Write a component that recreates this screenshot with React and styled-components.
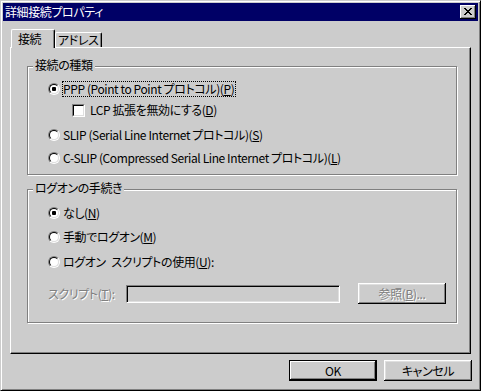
import React from 'react'
import styled, { createGlobalStyle, css } from 'styled-components'

const FACE = '#cccccc'
const SHADOW = '#808080'
const LIGHT = '#dfdfdf'
const NAVY = '#000066'

const GlobalStyle = createGlobalStyle`
  html, body { margin: 0; padding: 0; background: ${FACE}; }
  body {
    font-family: "Noto Sans CJK JP", "Liberation Sans", sans-serif;
    font-size: 12px;
    line-height: 14px;
    letter-spacing: -0.4px;
    font-feature-settings: "palt";
    color: #000;
  }
  * { box-sizing: border-box; }
`

const Window = styled.div`
  width: 481px;
  height: 391px;
  background: ${FACE};
  border: 1px solid;
  border-color: ${FACE} #000 #000 ${FACE};
  box-shadow: inset 1px 1px #fff, inset -1px -1px ${SHADOW};
  padding: 2px;
  display: flex;
  flex-direction: column;
`

const TitleBar = styled.div`
  height: 18px;
  background: ${NAVY};
  color: #fff;
  display: flex;
  align-items: center;
  justify-content: space-between;
  padding: 0 2px;
`

const TitleText = styled.span`
  white-space: nowrap;
`

const CloseButton = styled.div`
  width: 16px;
  height: 14px;
  background: ${FACE};
  box-shadow: inset -1px -1px #000, inset 1px 1px #fff, inset -2px -2px ${SHADOW};
  display: flex;
  align-items: center;
  justify-content: center;
  padding: 0 1px 1px 0;
`

const Body = styled.div`
  flex: 1;
  display: flex;
  flex-direction: column;
  padding: 0 7px;
`

const TabRow = styled.div`
  display: flex;
  align-items: flex-end;
  margin-top: 8px;
  padding-left: 1px;
`

const Tab = styled.div`
  position: relative;
  width: ${p => p.$w}px;
  height: ${p => (p.$active ? 19 : 15)}px;
  margin-bottom: ${p => (p.$active ? -1 : 0)}px;
  z-index: ${p => (p.$active ? 2 : 1)};
  padding-left: ${p => p.$pl}px;
  background: ${FACE};
  border: 1px solid;
  border-bottom: none;
  border-color: #fff #000 #000 #fff;
  border-radius: 2px 2px 0 0;
  box-shadow: inset -1px 0 ${SHADOW};
  display: flex;
  align-items: center;
  white-space: nowrap;
`

const Panel = styled.div`
  height: 307px;
  border: 1px solid;
  border-color: #fff #000 #000 #fff;
  box-shadow: inset -1px -1px ${SHADOW};
  padding: 18px 0 0 16px;
`

const Group = styled.div`
  position: relative;
  width: 430px;
  height: ${p => p.$h}px;
  margin-top: ${p => p.$mt || 0}px;
  border: 1px solid ${SHADOW};
  box-shadow: inset 1px 1px #fff, 1px 1px #fff;
  padding: ${p => p.$pt}px 0 0 20px;
`

const Legend = styled.span`
  position: absolute;
  top: -9px;
  left: 5px;
  padding: 0 2px;
  background: ${FACE};
  white-space: nowrap;
`

const Row = styled.div`
  display: flex;
  align-items: center;
  height: ${p => p.$h || 16}px;
  margin-top: ${p => p.$mt || 0}px;
  margin-left: ${p => p.$indent || 0}px;
  gap: ${p => p.$gap || 2}px;
`

const RadioOuter = styled.span`
  flex: none;
  width: 12px;
  height: 12px;
  border-radius: 50%;
  border: 1px solid;
  border-color: ${SHADOW} #fff #fff ${SHADOW};
`

const RadioInner = styled.span`
  width: 10px;
  height: 10px;
  border-radius: 50%;
  border: 1px solid;
  border-color: #000 ${LIGHT} ${LIGHT} #000;
  background: #fff;
  display: flex;
  align-items: center;
  justify-content: center;
`

const Dot = styled.span`
  width: 4px;
  height: 4px;
  border-radius: 1px;
  background: #000;
`

const CheckOuter = styled.span`
  flex: none;
  width: 13px;
  height: 13px;
  border: 1px solid;
  border-color: ${SHADOW} #fff #fff ${SHADOW};
`

const CheckInner = styled.span`
  display: block;
  width: 11px;
  height: 11px;
  border: 1px solid;
  border-color: #000 ${LIGHT} ${LIGHT} #000;
  background: #fff;
`

const Label = styled.span`
  height: 16px;
  border: 1px dotted ${p => (p.$focus ? '#000' : 'transparent')};
  padding: 0 1px 0 0;
  white-space: pre;
  ${p => p.$disabled && css`
    color: ${SHADOW};
    text-shadow: 1px 1px #fff;
  `}
`

const Key = styled.span`
  text-decoration: underline;
  text-underline-offset: 1px;
`

const FieldLabel = styled(Label)`
  flex: none;
  width: 76px;
  border: none;
  height: auto;
`

const TextBox = styled.div`
  flex: none;
  width: 214px;
  height: 18px;
  background: ${FACE};
  border: 1px solid;
  border-color: ${SHADOW} #fff #fff ${SHADOW};
  box-shadow: inset 1px 1px #000, inset -1px -1px ${LIGHT};
`

const Button = styled.button`
  flex: none;
  width: 88px;
  height: 21px;
  margin-left: ${p => p.$ml || 0}px;
  padding: 0;
  border: none;
  background: ${FACE};
  font: inherit;
  letter-spacing: inherit;
  color: #000;
  box-shadow: inset -1px -1px #000, inset 1px 1px #fff, inset -2px -2px ${SHADOW}, inset 2px 2px ${LIGHT};
  ${p => p.$default && css`
    box-shadow: inset 0 0 0 1px #000, inset -2px -2px #000, inset 2px 2px #fff, inset -3px -3px ${SHADOW};
  `}
  ${p => p.$disabled && css`
    color: ${SHADOW};
    text-shadow: 1px 1px #fff;
  `}
`

const ButtonRow = styled.div`
  display: flex;
  justify-content: flex-end;
  gap: 7px;
  margin-top: 6px;
  margin-right: -1px;
`

const X_ROWS = [
  [0, 1, 6, 7],
  [1, 2, 5, 6],
  [2, 3, 4, 5],
  [3, 4],
  [2, 3, 4, 5],
  [1, 2, 5, 6],
  [0, 1, 6, 7],
]

const CloseGlyph = () => (
  <svg width="8" height="7" viewBox="0 0 8 7" shapeRendering="crispEdges">
    {X_ROWS.flatMap((cols, y) =>
      cols.map(x => <rect key={`${x}-${y}`} x={x} y={y} width="1" height="1" fill="#000" />)
    )}
  </svg>
)

const Radio = ({ checked }) => (
  <RadioOuter>
    <RadioInner>{checked && <Dot />}</RadioInner>
  </RadioOuter>
)

const Checkbox = () => (
  <CheckOuter>
    <CheckInner />
  </CheckOuter>
)

export default function App() {
  return (
    <>
      <GlobalStyle />
      <Window>
        <TitleBar>
          <TitleText>詳細接続プロパティ</TitleText>
          <CloseButton>
            <CloseGlyph />
          </CloseButton>
        </TitleBar>
        <Body>
          <TabRow>
            <Tab $active $w={44} $pl={6}>接続</Tab>
            <Tab $w={47} $pl={2}>アドレス</Tab>
          </TabRow>
          <Panel>
            <Group $h={109} $pt={14}>
              <Legend>接続の種類</Legend>
              <Row>
                <Radio checked />
                <Label $focus>PPP (Point to Point プロトコル)(<Key>P</Key>)</Label>
              </Row>
              <Row $mt={5} $indent={24} $gap={4}>
                <Checkbox />
                <Label>LCP 拡張を無効にする(<Key>D</Key>)</Label>
              </Row>
              <Row $mt={9}>
                <Radio />
                <Label>SLIP (Serial Line Internet プロトコル)(<Key>S</Key>)</Label>
              </Row>
              <Row $mt={7}>
                <Radio />
                <Label>C-SLIP (Compressed Serial Line Internet プロトコル)(<Key>L</Key>)</Label>
              </Row>
            </Group>
            <Group $h={134} $mt={14} $pt={15}>
              <Legend>ログオンの手続き</Legend>
              <Row>
                <Radio checked />
                <Label>なし(<Key>N</Key>)</Label>
              </Row>
              <Row $mt={8}>
                <Radio />
                <Label>手動でログオン(<Key>M</Key>)</Label>
              </Row>
              <Row $mt={9}>
                <Radio />
                <Label>ログオン{'\u2002'}スクリプトの使用(<Key>U</Key>):</Label>
              </Row>
              <Row $h={21} $mt={13} $gap={0}>
                <FieldLabel $disabled>スクリプト(<Key>T</Key>):</FieldLabel>
                <TextBox />
                <Button $ml={16} $disabled>参照(<Key>B</Key>)...</Button>
              </Row>
            </Group>
          </Panel>
          <ButtonRow>
            <Button $default>OK</Button>
            <Button>キャンセル</Button>
          </ButtonRow>
        </Body>
      </Window>
    </>
  )
}
